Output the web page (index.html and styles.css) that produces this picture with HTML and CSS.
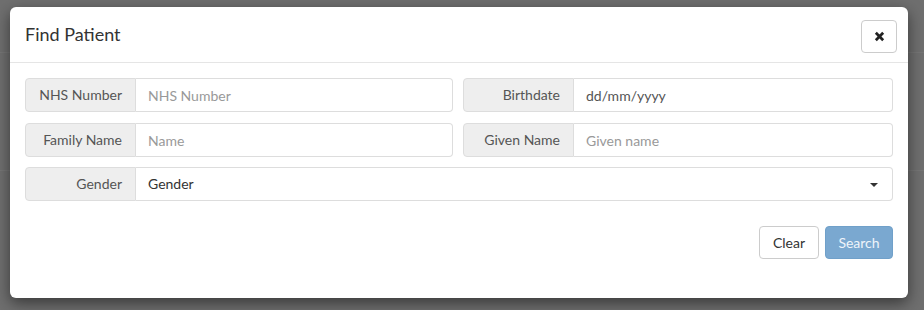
FILE: index.html
```html
<!DOCTYPE html>
<html lang="en">
<head>
<meta charset="utf-8">
<title>Find Patient</title>
<link rel="stylesheet" href="styles.css">
</head>
<body>
<div class="page-lines"></div>
<div class="modal">
  <div class="modal-header">
    <h4 class="modal-title">Find Patient</h4>
    <button class="close-btn" type="button" aria-label="Close">
      <svg width="12" height="12" viewBox="0 0 12 12"><path d="M2 2 L10 10 M10 2 L2 10" stroke="#222" stroke-width="3" stroke-linecap="butt"/></svg>
    </button>
  </div>
  <div class="modal-body">
    <div class="grid">
      <div class="input-group">
        <span class="addon">NHS Number</span>
        <input class="control" type="text" placeholder="NHS Number">
      </div>
      <div class="input-group">
        <span class="addon">Birthdate</span>
        <input class="control value" type="text" value="dd/mm/yyyy">
      </div>
      <div class="input-group">
        <span class="addon">Family Name</span>
        <input class="control" type="text" placeholder="Name">
      </div>
      <div class="input-group">
        <span class="addon">Given Name</span>
        <input class="control" type="text" placeholder="Given name">
      </div>
      <div class="input-group full">
        <span class="addon">Gender</span>
        <div class="control select">
          <span class="select-text">Gender</span>
          <svg class="caret" width="8" height="4" viewBox="0 0 8 4"><path d="M0 0 H8 L4 4 Z" fill="#333"/></svg>
        </div>
      </div>
    </div>
    <div class="actions">
      <button class="btn btn-default" type="button">Clear</button>
      <button class="btn btn-primary" type="button">Search</button>
    </div>
  </div>
</div>
</body>
</html>
```
FILE: styles.css
```css
* { box-sizing: border-box; }
html, body { margin: 0; padding: 0; }
body {
  width: 924px;
  height: 310px;
  background: #6f6f6f;
  font-family: Lato, "Open Sans", sans-serif;
  font-size: 14px;
  color: #333;
  overflow: hidden;
  position: relative;
  padding-top: 7px;
}
.page-lines {
  position: absolute;
  left: 0; right: 0; top: 0; bottom: 0;
  background:
    linear-gradient(#767676, #767676) 0 52px / 100% 1px no-repeat,
    linear-gradient(#767676, #767676) 0 170px / 100% 1px no-repeat;
}
.modal {
  position: relative;
  margin-left: 10px;
  width: 898px;
  height: 291px;
  background: #fff;
  border-radius: 6px;
  box-shadow: 0 5px 15px rgba(0,0,0,0.5);
}
.modal-header {
  height: 56px;
  border-bottom: 1px solid #e5e5e5;
  display: flex;
  align-items: center;
  justify-content: space-between;
  padding: 0 11px 0 15px;
}
.modal-title {
  margin: 0;
  font-size: 18px;
  font-weight: 400;
  color: #333;
  line-height: 1.1;
  padding-top: 1px;
}
.close-btn {
  width: 36px;
  height: 33px;
  margin-top: 3px;
  border: 1px solid #ccc;
  border-radius: 4px;
  background: #fff;
  display: flex;
  align-items: center;
  justify-content: center;
  padding: 0;
}
.close-btn svg { display: block; width: 11px; height: 11px; }
.modal-body {
  padding: 15px 15px 0 15px;
}
.grid {
  display: grid;
  grid-template-columns: 428px 430px;
  column-gap: 10px;
  row-gap: 11px;
}
.input-group {
  display: flex;
  height: 34px;
}
.input-group.full { grid-column: 1 / 3; margin-top: -1px; }
.addon {
  width: 111px;
  flex: none;
  background: #eee;
  border: 1px solid #ddd;
  border-right: 1px solid #ddd;
  border-radius: 4px 0 0 4px;
  color: #555;
  text-align: right;
  padding: 0 13px 0 6px;
  line-height: 32px;
  font-size: 14px;
}
.control {
  flex: 1;
  min-width: 0;
  border: 1px solid #ddd;
  border-left: none;
  border-radius: 0 4px 4px 0;
  padding: 0 12px;
  font-family: Lato, "Open Sans", sans-serif;
  font-size: 14px;
  color: #555;
  background: #fff;
  outline: none;
  height: 34px;
}
.control::placeholder { color: #999; }
.control.value { color: #555; }
.select {
  display: flex;
  align-items: center;
  justify-content: space-between;
  padding: 0 14px 0 12px;
  color: #333;
}
.select-text { padding-bottom: 1px; }
.caret { display: block; margin-top: 1px; }
.actions {
  display: flex;
  justify-content: flex-end;
  gap: 6px;
  margin-top: 25px;
}
.btn {
  height: 33px;
  border-radius: 4px;
  font-family: Lato, "Open Sans", sans-serif;
  font-size: 14px;
  padding: 0 10px;
  line-height: 31px;
}
.btn-default {
  width: 60px;
  background: #fff;
  border: 1px solid #ccc;
  color: #333;
}
.btn-primary {
  width: 68px;
  background: #7aa8d0;
  border: 1px solid #70a0c9;
  color: #eef4fa;
}
```
